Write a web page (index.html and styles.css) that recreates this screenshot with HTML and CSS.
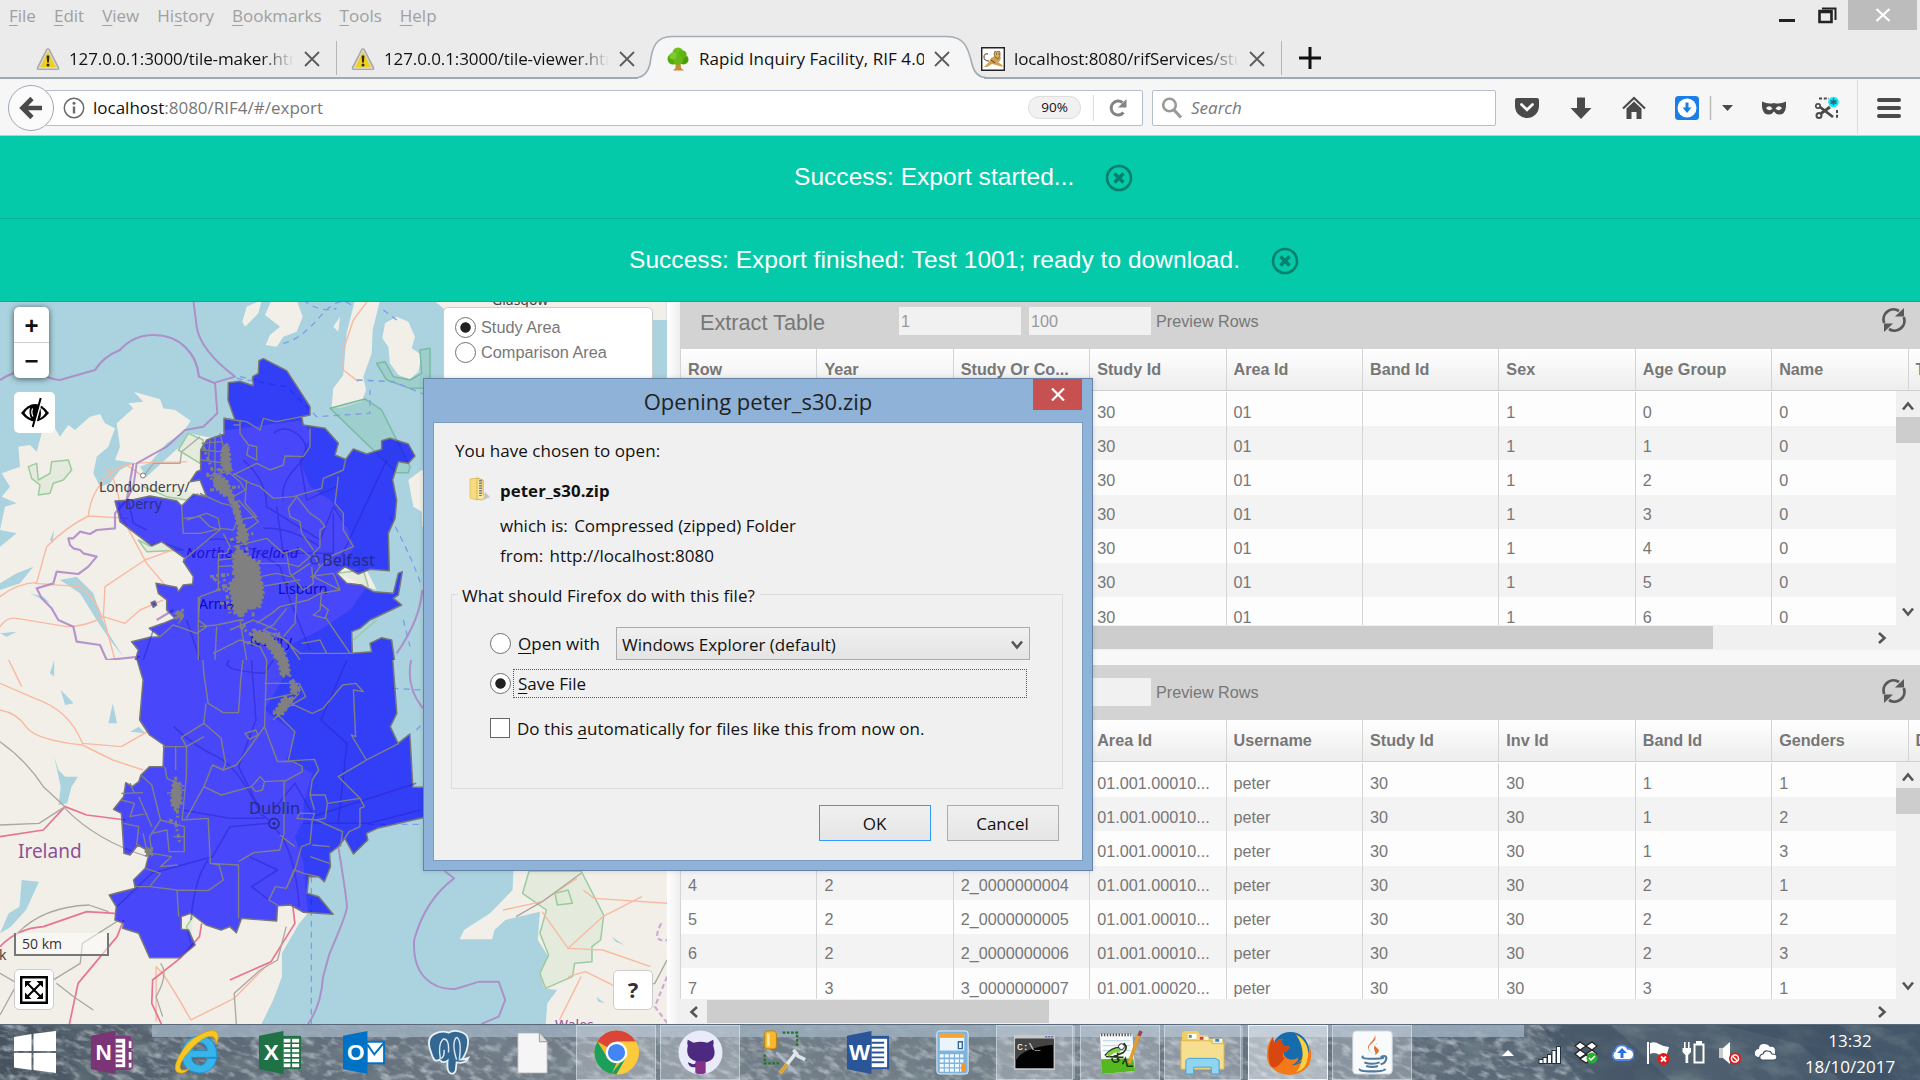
FILE: index.html
```html
<!DOCTYPE html>
<html lang="en">
<head>
<meta charset="utf-8">
<title>Rapid Inquiry Facility, RIF 4.0</title>
<link rel="stylesheet" href="styles.css">
</head>
<body>
<svg class="defs" width="0" height="0">
  <defs>
    <symbol id="warn" viewBox="0 0 24 24"><path d="M10 2.5Q12-.5 14 2.5L23 20Q24 23 21.500 23H2.500Q0 23 1 20Z" fill="#a9a9a2"/><path d="M12 3.200L21 21H3Z" fill="#f3cf1d" stroke="#dadad2" stroke-width="1.300"/><path d="M10.600 8.500h2.800l-.5 7h-1.800z" fill="#2c2c20"/><circle cx="12" cy="18" r="1.500" fill="#2c2c20"/></symbol>
    <symbol id="cross" viewBox="0 0 16 16"><path d="M1 1l14 14M15 1L1 15" stroke="#5c5c5c" stroke-width="1.800"/></symbol>
    <symbol id="refresh" viewBox="0 0 26 26"><path d="M3.200 16A10 10 0 0 1 18 4M22.800 10A10 10 0 0 1 8 22" fill="none" stroke="#58595b" stroke-width="2.800"/><path d="M23 1v8.500h-9zM3 25v-8.500h9z" fill="#58595b"/></symbol>
    <symbol id="up" viewBox="0 0 12 10"><path d="M1 8.500L6 2.500l5 6" fill="none" stroke="#555" stroke-width="2.600"/></symbol>
    <symbol id="down" viewBox="0 0 12 10"><path d="M1 1.500L6 7.500l5-6" fill="none" stroke="#555" stroke-width="2.600"/></symbol>
    <symbol id="right" viewBox="0 0 10 12"><path d="M2 1l5.500 5L2 11" fill="none" stroke="#555" stroke-width="2.600"/></symbol>
    <symbol id="left" viewBox="0 0 10 12"><path d="M8 1L2.500 6 8 11" fill="none" stroke="#555" stroke-width="2.600"/></symbol>
    <symbol id="dismiss" viewBox="0 0 28 28"><circle cx="14" cy="14" r="12" fill="none" stroke="#037f6d" stroke-width="2.600"/><path d="M9.500 9.500l9 9M18.500 9.500l-9 9" stroke="#037f6d" stroke-width="3.400"/></symbol>
  </defs>
</svg>

<header class="chrome">
  <div class="titlebar">
    <nav class="menu"><span><u>F</u>ile</span><span><u>E</u>dit</span><span><u>V</u>iew</span><span>Hi<u>s</u>tory</span><span><u>B</u>ookmarks</span><span><u>T</u>ools</span><span><u>H</u>elp</span></nav>
    <div class="winbtns">
      <svg width="16" height="30"><path d="M0 20.500h16" stroke="#222" stroke-width="3"/></svg>
      <svg width="19" height="30"><path d="M4 8.500h13.500V20" fill="none" stroke="#222" stroke-width="2"/><path d="M1.500 11h12v11h-12zM1 12h13" fill="none" stroke="#222" stroke-width="2.600"/></svg>
      <div class="winclose"><svg width="16" height="16" viewBox="0 0 16 16"><path d="M1.500 2l13 12M14.500 2l-13 12" stroke="#fff" stroke-width="2.300"/></svg></div>
    </div>
  </div>
  <div class="tabs">
    <div class="tab"><svg width="24" height="24"><use href="#warn"/></svg><span class="fade">127.0.0.1:3000/tile-maker.html</span><svg width="16" height="16"><use href="#cross"/></svg></div>
    <div class="tab"><svg width="24" height="24"><use href="#warn"/></svg><span class="fade">127.0.0.1:3000/tile-viewer.html</span><svg width="16" height="16"><use href="#cross"/></svg></div>
    <div class="tab active">
      <svg class="tabshape" width="350" height="44" viewBox="0 0 350 44"><path d="M0 44V43Q9 42 12 29C14 12 18 1.500 34 1.500H309C326 1.500 330 12 334 29Q337 42 346 43V44Z" fill="#f6f6f6"/><path d="M0 42.500Q9 41 12 29C14 12 18 1.500 34 1.500H309C326 1.500 330 12 334 29Q337 42 348 42.500" fill="none" stroke="#a3acb5" stroke-width="1.600"/></svg>
      <svg width="24" height="24" viewBox="0 0 24 24"><path d="M9.500 14h5l.5 7 3 2.500H7L9.500 21z" fill="#c98b35"/><circle cx="7" cy="12" r="5.500" fill="#56a80d"/><circle cx="17.500" cy="12.500" r="5" fill="#4d9d0b"/><circle cx="12" cy="6" r="5.500" fill="#6cc019"/><circle cx="16.500" cy="7.500" r="4" fill="#5db413"/><circle cx="12" cy="13" r="5" fill="#67b916"/><circle cx="7" cy="9" r="3.500" fill="#7bcb2b"/></svg>
      <span>Rapid Inquiry Facility, RIF 4.0</span><svg width="16" height="16"><use href="#cross"/></svg></div>
    <div class="tab last"><svg width="24" height="24" viewBox="0 0 24 24"><path d="M.7.700h22.600v22.600H.7z" fill="#fff" stroke="#222" stroke-width="1.400"/><path d="M3 20l5-5 2-4 4-2 6 1-1 4-2 1 4 3 1 2-7-2-4-1-5 3z" fill="#d2a04c"/><path d="M14 4l1 1 3-1 1 1v4l-2 3-3-2-1-3z" fill="#dcae55" stroke="#4d3c25" stroke-width=".6"/><path d="M8 14q-5 0-5-4t4-3M10 13l4 3M15 7h1M17.500 7h1" fill="none" stroke="#4d3c25" stroke-width="1"/></svg><span class="fade">localhost:8080/rifServices/studyResult</span><svg width="16" height="16"><use href="#cross"/></svg></div>
    <svg class="plus" width="22" height="22" viewBox="0 0 22 22"><path d="M11 0v22M0 11h22" stroke="#111" stroke-width="3"/></svg>
  </div>
  <div class="toolbar">
    <div class="back"><svg width="24" height="24" viewBox="0 0 24 24"><path d="M23 12H4M13 2.500L3.500 12l9.500 9.500" fill="none" stroke="#4a4a4a" stroke-width="4.600"/></svg></div>
    <div class="url">
      <svg width="22" height="22" viewBox="0 0 22 22"><circle cx="11" cy="11" r="9.700" fill="none" stroke="#6b6b6b" stroke-width="1.500"/><path d="M11 9.500v7" stroke="#6b6b6b" stroke-width="2.400"/><circle cx="11" cy="6.300" r="1.500" fill="#6b6b6b"/></svg>
      <span class="addr">localhost<i>:8080/RIF4/#/export</i></span>
      <span class="pill">90%</span>
      <span class="reload"><svg width="20" height="20" viewBox="0 0 20 20"><path d="M15.500 14.500A7 7 0 1 1 14.500 4.500" fill="none" stroke="#848484" stroke-width="3"/><path d="M18.500 1v8.500H10z" fill="#848484"/></svg></span>
    </div>
    <div class="search"><svg width="22" height="22" viewBox="0 0 22 22"><circle cx="8.500" cy="8" r="6.300" fill="none" stroke="#999" stroke-width="2.600"/><path d="M13 13l7 7.500" stroke="#999" stroke-width="3.200"/></svg><em>Search</em></div>
    <div class="tools">
      <svg width="26" height="24" viewBox="0 0 26 24"><path d="M3 2h20q2 0 2 2v6a12 12 0 0 1-24 0V4q0-2 2-2z" fill="#4a4a4a"/><path d="M7.500 8.500l5.500 5.300 5.500-5.300" fill="none" stroke="#f6f6f6" stroke-width="2.800" stroke-linecap="round"/></svg>
      <svg width="24" height="24" viewBox="0 0 24 24"><path d="M8 1.500h8V12h6.500L12 23 1.500 12H8z" fill="#4a4a4a"/></svg>
      <svg width="24" height="24" viewBox="0 0 24 24"><path d="M1 12.500L12 2l11 10.500" fill="none" stroke="#4a4a4a" stroke-width="2.200"/><path d="M4.500 12.500L12 5.500l7.500 7V23h-5v-7h-5v7h-5z" fill="#4a4a4a"/></svg>
      <svg width="24" height="24" viewBox="0 0 24 24"><rect width="24" height="24" rx="3.500" fill="#1a7ee6"/><circle cx="12" cy="12" r="9.500" fill="#fff"/><path d="M12 6.500v6" stroke="#1a7ee6" stroke-width="3"/><path d="M7.500 11.500h9L12 17z" fill="#1a7ee6"/></svg>
      <svg class="caretbox" width="28" height="24" viewBox="0 0 28 24"><path d="M4.500 0v24" stroke="#bbb" stroke-width="1.500"/><path d="M16 9h11l-5.500 6z" fill="#4a4a4a"/></svg>
      <svg width="24" height="24" viewBox="0 0 24 24"><path d="M0 5.500q6 3 12 1.500 6 1.500 12-1.500 1 13-7 13-3 0-5-3-2 3-5 3-8 0-7-13zM4 12q3 4 6.500.8-3-4.500-6.500-.8zM20 12q-3 4-6.500.8 3-4.500 6.500-.8z" fill="#4a4a4a" fill-rule="evenodd"/></svg>
      <svg width="24" height="24" viewBox="0 0 24 24"><path d="M4 2.500h10M22 14v8" fill="none" stroke="#4a4a4a" stroke-width="2" stroke-dasharray="3 1.800"/><circle cx="3" cy="10" r="2.200" fill="none" stroke="#4a4a4a" stroke-width="1.700"/><circle cx="4" cy="19.500" r="2.500" fill="none" stroke="#4a4a4a" stroke-width="2"/><path d="M5 11l13 10M6 17.500L15 11" stroke="#4a4a4a" stroke-width="2.800"/><circle cx="18.500" cy="6" r="5.300" fill="#12ebff"/><path d="M18.500 2.500v7M15.500 4.500l6 3M21.500 4.500l-6 3" stroke="#276b7d" stroke-width="1.600"/></svg>
    </div>
    <div class="burger"><i></i><i></i><i></i></div>
  </div>
</header>

<section class="notice n1"><span>Success: Export started...</span><svg width="28" height="28"><use href="#dismiss"/></svg></section>
<section class="notice n2"><span>Success: Export finished: Test 1001; ready to download.</span><svg width="28" height="28"><use href="#dismiss"/></svg></section>

<main class="content">
  <section class="map">
    <svg class="tiles" width="667" height="722" viewBox="0 302 667 722">
      <defs><clipPath id="ct"><rect x="0" y="300" width="667" height="360"/></clipPath><clipPath id="cb"><rect x="0" y="660" width="667" height="370"/></clipPath></defs>
      <rect y="300" width="667" height="730" fill="#aad3df"/>
      <g clip-path="url(#ct)"><g class="ns" transform="translate(0 300) scale(.33333)">
        <g class="land">
          <path d="M0 740L50 700 0 690 15 620 50 610 5 590 30 560 5 520 60 500 55 440 90 435 110 455 125 400 165 385 180 410 205 375 225 390 270 350 300 342 315 370 345 385 325 440 290 470 280 520 300 560 330 550 360 510 400 488 345 480 360 440 350 370 400 325 385 310 430 305 402 275 480 298 490 325 525 330 572 362 550 395 500 430 450 488 420 500 440 530 550 430 565 400 640 415 680 390 900 362 935 400 900 480 930 560 990 600 1030 650 1062 740 1020 800 1100 810 1130 870 1100 860 1050 930 960 990 880 1030 835 1100H0Z"/>
          <path d="M740 20L785 0 775 40 735 80 727 65ZM815 0H890L908 50 890 95 850 110 830 140 797 135 810 105 840 80 795 45ZM1065 0H1140L1118 90 1115 160 1090 230 1098 270 1085 305 1020 325 995 320 1000 265 1030 225 1040 100ZM1155 70L1190 50 1225 65 1245 110 1235 145 1265 165 1255 215 1230 237 1195 225 1170 190 1165 140 1147 115ZM1225 540L1265 510 1290 530V650L1240 620ZM1000 80L1020 50 1015 95ZM1290 690L1267 680 1265 630Z"/>
          <path d="M1180 0H2000V60H1950L1900 180 1800 200 1600 90 1480 60 1360 50 1300 0Z"/>
        </g>
        <g class="park"><path d="M85 500L110 490 115 540 150 520 155 485 205 480 215 510 190 540 160 550 150 580 115 585 120 555 95 535ZM535 450L565 400 610 420 600 490ZM415 720L440 755 550 750 480 725 450 738ZM430 560L500 590 560 600 595 580"/><path class="sea" d="M990 325L1095 297 1145 330 1230 500 1225 518H1190ZM1130 190L1155 185 1180 230 1230 240 1265 220 1260 150 1290 145V265L1230 265 1160 240Z"/><path d="M1010 820L1090 810 1105 860M1060 1020L1130 960"/></g>
        <path class="lake" d="M180 840L230 830 280 880 300 940 325 1000 370 1070 330 1020 290 960 240 880ZM90 880L130 890 150 910ZM0 1000L50 995 20 1010ZM0 850L50 820 100 800 60 850 0 870ZM150 720L162 690 158 730ZM440 880L450 900"/>
        <g class="road"><path d="M265 650C270 580 320 510 380 495S520 490 560 485M0 890Q50 850 110 848L140 740Q200 680 265 648L385 655M310 950L315 860 435 780 530 745M0 980Q20 950 50 955T200 980Q260 980 310 950L375 970 420 930 490 900M320 500Q360 560 360 640L440 790 495 855M310 950L345 1080M105 850L240 860Q290 900 305 950M1105 0L1060 60 1030 150V210L1075 245M380 495L430 530"/></g>
        <g class="rail"><path d="M430 530L460 490 540 490 545 455 600 410"/></g>
        <g class="border"><path d="M580 0L590 80Q600 150 705 230L645 248 652 340 610 380 555 390 500 440 410 490 400 560 380 600"/><path d="M0 240Q60 200 110 220T180 240L285 210Q310 170 360 150Q400 105 460 105C540 105 590 160 597 230L645 250M1267 870Q1260 960 1190 1060M400 490L380 600 345 640V685L290 690 270 702 240 695 220 715 205 715 210 735 220 745 240 750 250 760 290 770 265 800 235 822 170 815 160 850 110 865 125 895 155 925 175 960 220 980 230 1025 300 1035 320 1080 420 1070M470 960L520 930"/></g>
        <g class="ferry"><path d="M710 235L860 260 950 350 1110 340 1110 270M720 230L770 240M850 130Q900 120 960 50T1060 20M1070 240L1180 245 1290 290M1150 30L1190 60M1170 650Q1240 780 1265 860M1210 960L1230 1040M910 0Q960 40 1010 25"/></g>
      </g></g>
      <g clip-path="url(#cb)"><g class="ns" transform="translate(0 660) scale(.43367 .33333)">
        <g class="land"><path d="M0-5H640L650 60 610 150 680 220 660 300 720 340 700 430 700 480 680 530 700 610 710 760 690 790 650 880 650 950 630 1020 600 1100H0Z"/><path d="M1185 600L1182 690 1130 760 1070 810 1060 838 1135 838 1140 810 1165 780 1245 755 1240 840 1265 890 1245 940 1255 985 1285 990 1262 1030 1258 1100H1540V580Z"/></g>
        <g class="lake"><path d="M125 290L140 380 135 435 155 430 165 380 180 350 150 350 135 330ZM0 820L20 760 45 740 50 660 90 665 60 750 25 800ZM320 200L335 220 300 215ZM125 0V50L115 40ZM260 130L270 190 250 190ZM140 90L170 130 150 135ZM1410 830L1440 855 1420 845ZM1375 1010L1395 1030 1380 1025Z"/></g>
        <g class="park"><path d="M1220 633L1340 633 1392 765 1385 840 1365 860V905L1325 910 1320 950 1258 985 1245 940 1265 885 1245 820 1260 750 1205 700Z"/><path d="M1280 700L1310 690 1320 730 1285 735ZM440 850L430 800 445 770"/></g>
        <g class="road"><path d="M0 150Q40 160 60 200T190 255L260 300 330 330M0 70L80 115Q160 150 190 250L280 260 340 215M360 1085V920Q380 940 440 1080L540 1015 620 910M1160 750L1250 725 1290 690 1330 655M1250 755L1310 865 1390 870 1500 920M1345 690L1370 715 1540 730M1310 865L1390 770 1480 710M1310 950L1350 935 1420 980 1500 970M1290 1080L1340 950M20 0L50 80"/></g>
        <g class="pink"><path d="M0 530L100 510 150 440 200 465 290 480M0 860Q40 805 100 800L200 755 265 760M160 1092L180 970 270 830 285 780M372 1092L350 1030 352 960 415 895 460 830 465 790M530 960L625 905 680 790 675 735"/></g>
        <g class="rail"><path d="M0 245Q60 300 100 380L150 440 90 490 0 495M150 445Q220 540 340 590M110 970L185 910 190 850 275 780M0 940L40 970 0 1065M40 820Q100 740 205 735L250 755M130 970L170 1010 215 1050M1190 770L1250 725 1340 640M1450 990L1510 970 1538 900M370 910Q390 940 360 1010L375 1070M545 1092L540 1000 600 930 640 900 660 800"/></g>
        <g class="border"><path d="M975 145Q935 80 948 0M780 560Q800 720 800 740T760 880L745 950Q740 1040 710 1092M1025 633L1047 655Q980 720 955 840C950 950 1000 990 1050 987L1105 965H1150L1165 1020 1150 1070 1110 1092"/><path class="wb" d="M1525 790Q1500 850 1540 840M1538 950L1510 1040 1540 1092"/></g>
        <g class="ferry"><path d="M718 650V1092M905 85L975 90M960 210L975 190M850 493H975"/></g>
      </g></g>
      <g class="maplabels under-labels"><text x="186" y="558" class="ni">Northern Ireland</text><text x="278" y="594">Lisburn</text><text x="199" y="609">Armagh</text><text x="250" y="646">Newry</text></g>
      <g clip-path="url(#ct)"><g class="ns" transform="translate(0 300) scale(.33333)">
        <path class="area" d="M345 603L395 600 450 588 530 602 545 618 580 583 620 590 600 540 570 545 590 515 602 510V450L620 420 672 402V355L705 360 684 300 685 248 720 244 760 257 758 230 775 220 777 182 790 176 860 212 930 320V345L905 350 910 375 975 385 1015 430 1005 465 1037 478 1060 447 1100 462 1145 448V422L1170 415 1225 432 1245 468 1225 490 1195 485 1178 540 1190 600 1185 655 1165 700 1168 812 1110 808 1075 822 1035 800 1010 820 1040 850 1085 855 1120 875 1180 880 1195 820 1207 815 1195 885 1180 895 1205 915 1110 960 1080 985 1055 995 1057 1060 1115 1055 1110 1030 1145 1013 1175 1020 1186 1100H400L415 1050 395 1025 450 1012 480 1010 448 985 490 970 525 955 500 930V900L475 880 468 850 530 862 535 875 550 855 578 852 580 830 550 785 555 775 485 725 455 738 360 665 355 640ZM453 908L465 903 470 915 460 922Z"/>
        <path class="under" d="M820 400Q860 370 900 410T890 500 850 600M730 480Q800 540 800 620L960 720 1000 620 1040 680M790 685Q870 680 960 740M560 960L600 1080M1160 480L1010 800M900 480L920 600 1010 560M385 600L400 670 440 690M1000 640V760L850 760 830 620M430 1080L460 990M620 720Q700 700 840 800L870 900 930 1050"/>
        <path class="cells" d="M705 360L740 365 780 390 790 355 815 362 830 365 905 350M720 363V400L745 435 770 440V480L740 465 745 440M720 375H700M672 355L720 363M930 385V440L910 470 855 468 850 495 810 510 770 490 700 525M1037 478L1030 510 970 535 965 565 880 590 820 595 780 560 740 545 700 520M1015 530L1005 610 1030 640 1030 690 1060 740 1000 765 960 800 940 760 960 740 960 690 975 680 960 660 930 640 890 590 865 625 870 650 900 665 905 700 930 735 940 750M545 618L550 700 600 700 665 685 550 780M550 655L600 650 630 680 660 690 655 655 620 640 560 660M665 685L700 690 720 640 710 620 665 610 600 580M605 430L665 425M605 450L660 455 690 440M603 480L680 490M620 530L700 510M630 420L625 480M645 410V560L700 600M660 400L690 520 720 545 735 570 700 590M740 540L735 610 770 650 710 660M715 600L775 665 740 690M655 760L680 760 690 740 670 700M655 760L655 870 600 890M655 780L700 775M655 800L720 795M700 740L800 715 850 760 900 745 930 770 895 800 860 790 780 790M780 830L830 820 870 830 930 790M860 760L870 820 910 870 940 850 935 800M780 860L900 840M960 800L940 830 1020 870 960 880 925 900 840 920 815 940 770 970M1020 870L1000 820 930 830M965 870L960 930 940 945 975 955 985 930 960 910M975 950L1050 1060M860 925L820 975 790 990 860 1020 900 1080M890 880L885 970 850 1010M600 890L595 960 620 980 590 1000 550 985 520 975 480 1010M520 940L550 950 535 970M595 890V1080M650 980L645 1080M600 980L650 975 720 960 740 1080M760 1000L830 1000 900 1060 1057 1060M640 1060L720 1020 780 1040 800 1080M690 990L760 960 830 990M905 1030L960 1020 980 1060"/>
        <path class="dense" d="M680 430L688 460 692 510 682 520 668 500 664 460ZM640 520L680 540 700 590 670 585 645 560ZM695 595L715 610 722 660 735 680 745 710 738 725 712 725 715 680 705 640ZM712 740L740 765 775 790 780 830 790 880 780 920 745 925 725 950 705 940 700 910 690 870 690 850 710 830 700 810 703 770ZM760 990L800 1000 835 1030 850 1050 860 1080H830L800 1030 760 1020ZM530 938L548 930 548 955 530 955Z"/>
        <path class="densel" d="M620 520L700 610M630 570L720 560M670 440L660 560M690 600L740 740M690 720L760 700M630 830L780 810M650 870L790 850M660 910L780 900M700 760L720 950M740 740L760 950M670 820L690 940M780 780L700 930M640 835L700 880M720 980L860 1080M740 1030L840 1000M720 940L740 1000M650 510L700 500M610 440L640 520"/>
      </g></g>
      <g clip-path="url(#cb)"><g class="ns" transform="translate(0 660) scale(.43367 .33333)">
        <path class="area" d="M314-10L330 60 322 180 345 225 378 255 376 320H345L325 345 320 365 305 380 290 368 285 410 262 448 280 460 286 580 300 585 318 555 345 575 335 625 308 660 312 685 280 695 252 705 268 740 265 780 285 790 283 805 320 820 345 893H415L450 855 435 810 418 808V770L440 760 475 795 510 810 530 800 545 818 557 775 638 783 640 737 670 735 700 757 768 763 735 710 708 700 712 650 735 650 748 665 762 620 760 580 780 560 795 535 815 582 848 540 845 520 870 505 975 473 1000 470V382H952L945 222 918 250 900 200 915 160 905-10Z"/>
        <path class="under" d="M400 200Q450 260 500 290T600 460L620 480M620 490L530 500 490 590 350 640 270 740M630 500Q680 560 690 740M420 450L530 475H610M580 0L590 180 550 320 600 450M800 0L740 180 800 250 780 490M630 450L680 370 720 460M530 0Q500 30 610 40L630 0M700 490H850L970 450M480 600Q450 650 440 780M575 590L640 630 580 680 620 720M720 470L960 370"/>
        <path class="cells" d="M468 0L470 40 480 130 515 158H550L555 60 560 0M475 130L470 190 418 232 430 260V345L420 480 480 475 485 610 550 615V775M375 260H430M405 260V330M430 260L470 230M470 190L510 235 520 310 515 330 490 315 470 380 430 475M470 380L510 405 580 380 600 350 610 365 655 362V520L645 570 585 578 550 605M580 380L590 395 605 390 610 365M515 330L545 315 560 290 610 200 615 0M610 200L640 305 725 298 735 330 720 360 715 405 725 450M630 150L660 190 680 215 665 300M640 305L675 305 697 320V335L655 365M820 70L790 75 745 145 720 160 670 130M820 70L838 95 815 90 820 230 810 225 845 300 780 350 830 415 840 440 830 445V500L805 515 795 535M845 300L920 250M715 405L750 405 755 430 830 415M755 430L750 475 730 480 685 475 690 460 725 460 720 480 715 550 695 560 680 630 700 640 735 650M730 480L790 515 785 560M720 555L760 560M715 590L760 610M645 525L680 560M680 630L660 685 635 680 620 720 640 735M660 685L680 625M408 690L480 692 515 660 505 615 485 610M345 680L408 690 412 770M335 625L370 640 345 680H310M350 580L395 590 370 620 410 615M280 400L330 398M280 420L310 430 300 470 340 460M285 490L320 500 315 555M300 370L310 400M325 345L350 375 370 480 345 530 350 580M380 320L385 355 425 380M385 400L425 390M370 480L425 500V575L390 575 385 510 350 520M330 520L340 580M320 410L350 500M400 530L425 530M565 220L590 210 595 225 575 238ZM610 70L690 70 705 110 665 140 640 170M610 120L680 100M690 100L630 180"/>
        <path class="dense" d="M640-5H662L668 40 650 50ZM670 65L690 80 680 100 672 95ZM655 110L675 118 650 165 632 160ZM400 365L415 370 418 430 405 450 395 430ZM337 567L350 565 350 585 337 585Z"/>
        <path class="densel" d="M660 30L690 90 650 150M405 350L410 480M390 480L415 490M405 490L415 550"/>
      </g></g>
      <g class="maplabels"><text x="492" y="305">Glasgow</text><text x="99" y="492">Londonderry/</text><text x="125" y="509" class="tint">Derry</text><text x="322" y="566" class="city">Belfast</text><text x="249" y="814" class="city">Dublin</text><text x="18" y="858" class="irl">Ireland</text><text x="555" y="1030" class="wal">Wales</text><text x="-1" y="960">k</text></g>
      <circle cx="274" cy="823.500" r="5" fill="none" stroke="#242a86" stroke-width="1.400"/><circle cx="274" cy="823.500" r="1.600" fill="#242a86"/><circle cx="143" cy="475.500" r="2.500" fill="#fff" stroke="#777"/><circle cx="315" cy="560" r="4" fill="none" stroke="#3038a5" stroke-width="1.400"/>
    </svg>
    <div class="zoom"><span>+</span><span>−</span></div>
    <div class="mapbtn eye"><svg width="28" height="30" viewBox="0 0 28 30"><path d="M0 15Q14-3 28 15Q14 32 0 15Z" fill="#000"/><path d="M3.500 15Q6 11 9 9.500Q7.500 15 10 20.500Q6 19 3.500 15ZM24.500 15Q22 19 19 20.500Q21 15 19 9.500Q22 11 24.500 15Z" fill="#fff"/><path d="M11.500 10.500Q10 15 12 18.500" stroke="#fff" stroke-width="1.200" fill="none"/><path d="M21 0L13 30" stroke="#fff" stroke-width="2"/><path d="M19.700 0L11.700 29" stroke="#000" stroke-width="2"/></svg></div>
    <div class="layers"><label><b class="radio on"></b>Study Area</label><label><b class="radio"></b>Comparison Area</label></div>
    <div class="scale">50 km</div>
    <div class="mapbtn full"><svg width="28" height="28" viewBox="0 0 28 28"><path d="M1.200 1.200h25.600v25.600H1.200z" fill="#fff" stroke="#000" stroke-width="2.400"/><path d="M7 7l14 14M21 7L7 21" stroke="#000" stroke-width="2"/><path d="M5 5h6.500L5 11.500zM23 5v6.500L16.500 5zM5 23v-6.500l6.500 6.500zM23 23h-6.500l6.500-6.500z"/><circle cx="14" cy="14" r="1.500"/></svg></div>
    <div class="mapbtn help">?</div>
  </section>

  <section class="tables">
    <div class="panel p1">
      <div class="phead"><h2>Extract Table</h2><span class="inp">1</span><span class="inp">100</span><span>Preview Rows</span><svg width="26" height="26"><use href="#refresh"/></svg></div>
      <div class="row head"><span>Row</span><span>Year</span><span>Study Or Co...</span><span>Study Id</span><span>Area Id</span><span>Band Id</span><span>Sex</span><span>Age Group</span><span>Name</span><span>T</span></div>
      <div class="body">
        <div class="rows">
          <div class="row"><span></span><span></span><span></span><span>30</span><span>01</span><span></span><span>1</span><span>0</span><span>0</span></div>
          <div class="row"><span></span><span></span><span></span><span>30</span><span>01</span><span></span><span>1</span><span>1</span><span>0</span></div>
          <div class="row"><span></span><span></span><span></span><span>30</span><span>01</span><span></span><span>1</span><span>2</span><span>0</span></div>
          <div class="row"><span></span><span></span><span></span><span>30</span><span>01</span><span></span><span>1</span><span>3</span><span>0</span></div>
          <div class="row"><span></span><span></span><span></span><span>30</span><span>01</span><span></span><span>1</span><span>4</span><span>0</span></div>
          <div class="row"><span></span><span></span><span></span><span>30</span><span>01</span><span></span><span>1</span><span>5</span><span>0</span></div>
          <div class="row"><span></span><span></span><span></span><span>30</span><span>01</span><span></span><span>1</span><span>6</span><span>0</span></div>
        </div>
        <div class="vscroll"><svg width="12" height="10"><use href="#up"/></svg><i></i><svg class="end" width="12" height="10"><use href="#down"/></svg></div>
      </div>
      <div class="hscroll"><svg width="10" height="12"><use href="#left"/></svg><i class="t1"></i><svg class="end" width="10" height="12"><use href="#right"/></svg></div>
    </div>
    <div class="panel p2">
      <div class="phead"><h2></h2><span class="inp"></span><span class="inp"></span><span>Preview Rows</span><svg width="26" height="26"><use href="#refresh"/></svg></div>
      <div class="row head"><span></span><span></span><span></span><span>Area Id</span><span>Username</span><span>Study Id</span><span>Inv Id</span><span>Band Id</span><span>Genders</span><span>D</span></div>
      <div class="body">
        <div class="rows">
          <div class="row"><span></span><span></span><span></span><span>01.001.00010...</span><span>peter</span><span>30</span><span>30</span><span>1</span><span>1</span></div>
          <div class="row"><span></span><span></span><span></span><span>01.001.00010...</span><span>peter</span><span>30</span><span>30</span><span>1</span><span>2</span></div>
          <div class="row"><span></span><span></span><span></span><span>01.001.00010...</span><span>peter</span><span>30</span><span>30</span><span>1</span><span>3</span></div>
          <div class="row"><span>4</span><span>2</span><span>2_0000000004</span><span>01.001.00010...</span><span>peter</span><span>30</span><span>30</span><span>2</span><span>1</span></div>
          <div class="row"><span>5</span><span>2</span><span>2_0000000005</span><span>01.001.00010...</span><span>peter</span><span>30</span><span>30</span><span>2</span><span>2</span></div>
          <div class="row"><span>6</span><span>2</span><span>2_0000000006</span><span>01.001.00010...</span><span>peter</span><span>30</span><span>30</span><span>2</span><span>3</span></div>
          <div class="row"><span>7</span><span>3</span><span>3_0000000007</span><span>01.001.00020...</span><span>peter</span><span>30</span><span>30</span><span>3</span><span>1</span></div>
        </div>
        <div class="vscroll"><svg width="12" height="10"><use href="#up"/></svg><i></i><svg class="end" width="12" height="10"><use href="#down"/></svg></div>
      </div>
      <div class="hscroll"><svg width="10" height="12"><use href="#left"/></svg><i class="t2"></i><svg class="end" width="10" height="12"><use href="#right"/></svg></div>
    </div>
  </section>
</main>

<div class="dialog">
  <div class="dtitle"><span>Opening peter_s30.zip</span><div class="dclose"><svg width="14" height="13" viewBox="0 0 14 13"><path d="M1 .5l12 12M13 .5l-12 12" stroke="#fff" stroke-width="2.200"/></svg></div></div>
  <div class="dbody">
    <p class="chosen">You have chosen to open:</p>
    <div class="file">
      <svg width="22" height="24" viewBox="0 0 22 24"><path d="M1 2l7-1 6 2v18l-6 2-7-2z" fill="#f5dc82" stroke="#dfbe56" stroke-width=".8"/><path d="M8 1l6 2v14l3 4-4 2-5-1z" fill="#f9e7a0" stroke="#cfa948" stroke-width=".8"/><path d="M11.500 3v16" stroke="#727b86" stroke-width="2.800" stroke-dasharray="1.500 1"/><path d="M16 15l5 5-7 3z" fill="#c9c5b8"/></svg>
      <dl><dt><b>peter_s30.zip</b></dt><dt>which is: <span class="kind">Compressed (zipped) Folder</span></dt><dt>from: <span class="src">http://localhost:8080</span></dt></dl>
    </div>
    <div class="group">
      <span class="legend">What should Firefox do with this file?</span>
      <div class="opt o1"><b class="radio"></b><span><u>O</u>pen with</span><div class="combo">Windows Explorer (default)<svg width="12" height="12" viewBox="0 0 12 10"><path d="M1 1.500L6 7.500l5-6" fill="none" stroke="#555" stroke-width="2.600"/></svg></div></div>
      <div class="opt o2"><b class="radio on"></b><span class="focus"><u>S</u>ave File</span></div>
      <div class="opt o3"><b class="check"></b><span>Do this <u>a</u>utomatically for files like this from now on.</span></div>
    </div>
    <div class="actions"><div class="btn ok">OK</div><div class="btn">Cancel</div></div>
  </div>
</div>

<footer class="taskbar">
  <svg class="wall" width="1920" height="56" viewBox="0 0 1920 56" preserveAspectRatio="none">
    <defs><linearGradient id="wg"><stop offset="0" stop-color="#46535f"/><stop offset=".12" stop-color="#5e6a77"/><stop offset=".3" stop-color="#727d88"/><stop offset=".55" stop-color="#6f7b85"/><stop offset=".78" stop-color="#5a6876"/><stop offset="1" stop-color="#43566a"/></linearGradient>
    <filter id="rock" x="0" y="0" width="100%" height="100%"><feTurbulence type="fractalNoise" baseFrequency=".09 .14" numOctaves="4" seed="8"/><feColorMatrix values="0 0 0 0 .68  0 0 0 0 .72  0 0 0 0 .76  2.200 0 0 0 -1"/></filter>
    <filter id="rockd" x="0" y="0" width="100%" height="100%"><feTurbulence type="fractalNoise" baseFrequency=".03 .06" numOctaves="4" seed="3"/><feColorMatrix values="0 0 0 0 .2  0 0 0 0 .27  0 0 0 0 .28  2.200 0 0 0 -1"/></filter></defs>
    <rect width="1920" height="56" fill="url(#wg)"/><g transform="skewX(35)"><rect x="-60" width="1620" height="56" filter="url(#rock)" opacity=".75"/><rect x="-60" width="2040" height="56" filter="url(#rockd)" opacity=".6"/></g>
    <path d="M1540 0h70l60 56h-90zM1720 0l80 20 40 36h60l-60-56z" fill="#3a4b60" opacity=".45"/>
    <rect x="152" y="1" width="1372" height="12" fill="#9badbd" opacity=".85"/><path d="M0 .5h1920" stroke="#59697a"/>
  </svg>
  <div class="start"><svg width="42" height="42" viewBox="0 0 42 42"><path d="M0 6l17.500-3v17H0zM19.500 2.700L42 0v20H19.500zM0 22h17.500v17L0 36.500zM19.500 22H42v20l-22.500-3z" fill="#fff"/></svg></div>
  <div class="apps">
    <div><svg viewBox="0 0 46 46"><path d="M24 6h16q2 0 2 2v31q0 2-2 2H24z" fill="#80397b"/><path d="M26 9h10v29H26z" fill="#fff"/><path d="M26 14h7M26 19h7M26 24h7M26 29h7M26 34h7" stroke="#80397b" stroke-width="2"/><path d="M39 11h4v8h-4zM39 22h4v9h-4zM39 33h4v6h-4z" fill="#fff" stroke="#80397b" stroke-width="1.200"/><path d="M1 6l25-5v44L1 40z" fill="#7b3576"/><text x="5.500" y="31" class="let">N</text></svg></div>
    <div><svg viewBox="0 0 46 46"><path fill-rule="evenodd" d="M44 29Q40 44 26 44 8 43 8 25 9 7 26 6 44 7 44 28H18q1 8 9 8 5 0 7-7zM18 21h16q-1-8-8-8-7 1-8 8z" fill="#37b4ea" stroke="#148ccb" stroke-width=".8"/><path d="M6 44Q-3 43 5 27T26 5q17-9 19 0 1 4-2 9 0-10-9-7T11 27Q3 39 8 41q3 1 8-2-5 6-10 5z" fill="#f7c824" stroke="#d89e12" stroke-width=".8"/></svg></div>
    <div><svg viewBox="0 0 46 46"><path d="M24 6h20v34H24z" fill="#207245"/><path d="M26 9h16v29H26z" fill="#fff"/><path d="M26 13.500h17M26 18.500h17M26 23.500h17M26 28.500h17M26 33.500h17M34 9v30" stroke="#207245" stroke-width="1.700"/><path d="M1 6l25-5v44L1 40z" fill="#1f7244"/><text x="6" y="31" class="let">X</text></svg></div>
    <div><svg viewBox="0 0 46 46"><path d="M24 11h20v24H24z" fill="#0072c6"/><path d="M26 13h16v20H26z" fill="#fff"/><path d="M26 15l7 10L43 13" fill="none" stroke="#0072c6" stroke-width="2"/><path d="M1 6l25-5v44L1 40z" fill="#0072c6"/><text x="5" y="31" class="let">O</text></svg></div>
    <div><svg viewBox="0 0 46 50"><path d="M8 4Q16 0 23 3q7-4 16 0 9 4 4 20-3 8-6 10 4 0 8-2-3 7-13 5l-1 9q-2 5-6 3-4-2-3-14-5 4-9-1-6 4-9-7Q-3 9 8 4z" fill="#336791" stroke="#e8f0f6" stroke-width="2"/><path d="M17 10q-6 6-3 22M17 10q7-1 6 15M32 8q-6 6 0 25M32 8q6 4 3 25M15 32q4-4 3-10" fill="none" stroke="#dce8f1" stroke-width="1.600"/></svg></div>
    <div><svg viewBox="0 0 46 46"><path d="M8 3h22l8 9v32H8z" fill="#f5f5f5" stroke="#aaa" stroke-width=".8"/><path d="M30 3v9h8" fill="#ddd" stroke="#999"/></svg></div>
    <div class="box"><svg viewBox="0 0 46 46"><circle cx="23" cy="23" r="22.500" fill="#f3bb32"/><path d="M23 23L3.500 11.700A22.500 22.500 0 0 1 42.500 11.700H23z" fill="#dc4437"/><path d="M3.500 11.700L14 29l9 5-5 11A22.500 22.500 0 0 1 3.500 11.700z" fill="#1c9f5b"/><path d="M33 28l-10 17.500-5-1L28 32z" fill="#1c9f5b"/><path d="M43 12H23l10 16-10 17.500A22.500 22.500 0 0 0 43 12z" fill="#fccb3c"/><circle cx="23" cy="23" r="11" fill="#fff"/><circle cx="23" cy="23" r="8.800" fill="#4285f4"/></svg></div>
    <div class="box"><svg viewBox="0 0 46 46"><circle cx="23" cy="23" r="22.500" fill="#e9eafa"/><path d="M10 10l6 3q7-2 14 0l6-3q1 4 0 6 5 14-8 17v11q-5 2-10 0v-6q-7 1-8-5l3 1q3 2 5 0 0-2 1-2-12-3-9-16-1-3 0-6z" fill="#4d2a80"/><path d="M18 32h10v12q-5 2-10 0z" fill="#85318c"/></svg></div>
    <div><svg viewBox="0 0 46 50"><rect x="1" y="1" width="13" height="20" rx="3" fill="#f5b82f" stroke="#bd7a0b"/><path d="M5 4v14" stroke="#ffe69a" stroke-width="3"/><path d="M21 3h16v16M1 27v10h16" fill="none" stroke="#24752c" stroke-width="2.600" stroke-dasharray="3 1.600"/><path d="M14 25l22 23" stroke="#abb7c5" stroke-width="3"/><path d="M18 48l19-24" stroke="#e3e7ed" stroke-width="4"/><path d="M18 48l8-10" stroke="#e0a228" stroke-width="4"/><path d="M33 22l5 7 8 4" stroke="#dce3ed" stroke-width="4" fill="none"/></svg></div>
    <div><svg viewBox="0 0 46 46"><path d="M24 6h20v34H24z" fill="#2a5699"/><path d="M26 9h16v29H26z" fill="#fff"/><path d="M26 13h13M26 18h13M26 23h13M26 28h13M26 33h13" stroke="#2a5699" stroke-width="2"/><path d="M1 6l25-5v44L1 40z" fill="#2a5699"/><text x="3" y="31" class="let">W</text></svg></div>
    <div><svg viewBox="0 0 46 46"><rect x="7" y="1" width="32" height="44" rx="3" fill="#7db4de" stroke="#e4f2fc"/><rect x="10" y="4" width="25" height="17" fill="#eaf4fb"/><path d="M10 6h25" stroke="#f5a434" stroke-width="4"/><path d="M10 26.500h24M10 31.500h24M10 36.500h24M10 41h24" stroke="#f4f9ff" stroke-width="3.400" stroke-dasharray="4 1.200"/><rect x="32" y="34" width="4" height="9" fill="#f49532"/><path d="M29 12h4v7h-4z" fill="none" stroke="#336693" stroke-width="1.400"/></svg></div>
    <div class="box stack"><svg viewBox="0 0 46 46"><path d="M2 5h42v36H2z" fill="#c6c8ca"/><path d="M3.500 9h39v30h-39z" fill="#020202"/><path d="M3.500 9h39v6Q10 18 3.500 32z" fill="#444"/><path d="M34 7h8" stroke="#5a6da5" stroke-width="1.500" stroke-dasharray="2 1"/><text x="5" y="20" class="cmd">C:\_</text></svg></div>
    <div class="box"><svg viewBox="0 0 46 46"><path d="M2 4h33l3 38-34 3z" fill="#f8fafb"/><path d="M3 30l33-1 2 13-34 3z" fill="#54b91e"/><path d="M5 11h28M5 16h28M5 21h28" stroke="#a6c7dc" stroke-width=".8"/><path d="M3 5h31" stroke="#555" stroke-width="3" stroke-dasharray="1.500 1.500"/><path d="M7 26q8-9 16-8l4-4q4 4-1 9l-10 4q-4 3 1 6 6 0 4-4M8 27l18 1M20 23v8M25 35l3-6 2 8h6" fill="none" stroke="#203416" stroke-width="1.600"/><path d="M10 26q6-6 13-5" stroke="#81d23a" stroke-width="4" fill="none"/><circle cx="24" cy="17" r="3" fill="#fff" stroke="#222"/><path d="M32 34L42 4" stroke="#e29d2c" stroke-width="3.600"/><path d="M42 6l2-5" stroke="#a1424a" stroke-width="3.600"/></svg></div>
    <div class="box stack"><svg viewBox="0 0 46 46"><path d="M2 3l2-2h14l3 4h7l2 4h14v6H2z" fill="#f2cd61"/><path d="M8 4h9v5H8z" fill="#fff"/><path d="M19 7h10v4H19zM34 9h9v4h-9z" fill="#e9f2ff"/><path d="M9 5h3v3H9z" fill="#3fa63f"/><path d="M20 7h4v3h-4z" fill="#da3c2f"/><path d="M36 9h4v3h-4z" fill="#3687cb"/><path d="M1 11h30l2 3h12v26H1z" fill="#f6df91" stroke="#dcb651"/><path d="M6 45V31l3-2h27l4 2v14h-8v-7H14v7z" fill="#8fd4f1" stroke="#4aa4d2"/></svg></div>
    <div class="box lit"><svg viewBox="0 0 46 46"><circle cx="25" cy="21" r="19" fill="#176cad"/><path d="M27 2q9 4 11 14 3 14-8 19 17-7 14-22 9 30-20 33Q4 45 1 28 0 15 7 7q0 4 2 6 4-4 8-4-2 4 1 7l6 1q0 3-6 6 0 5 6 7 5 1 9-2 0 5-7 8 14 0 16-14Q42 9 27 2z" fill="#f47919"/><path d="M7 7q0 4 2 6 4-4 8-4-2 4 1 7l6 1q0 3-6 6-2 4 1 6Q9 44 4 35 0 20 7 7z" fill="#d94711"/><path d="M31 5q13 7 12 21T31 43Q44 25 31 5z" fill="#fbd042"/></svg></div>
    <div class="box"><svg viewBox="0 0 46 50"><rect x="1" y="1" width="44" height="48" rx="4" fill="#f8fafc" stroke="#c7d0d8"/><path d="M25 4q4 6-3 11t1 11q-9-5-2-12t4-10zM30 14q-7 4-5 8t1 6q7-5 2-8t2-6z" fill="#e76f28"/><path d="M13 29q-5 3 10 3t11-2M14 36q9 3 17 0M16 40q7 2 13 0M9 43q-2 3 13 3t15-3M32 30q8-3 6 3-1 4-6 5" fill="none" stroke="#50799b" stroke-width="2.300"/></svg></div>
  </div>
  <div class="tray">
    <svg width="12" height="24" viewBox="0 0 12 24"><path d="M0 15l6-6 6 6z" fill="#fff"/></svg>
    <svg width="24" height="24" viewBox="0 0 24 24"><path d="M3 18v5M7 16v7M11.500 13v10M16 9v14M20.500 5v18" stroke="#20303e" stroke-width="5"/><path d="M3 19v3M7 17v5M11.500 14v8M16 10v12M20.500 6v16" stroke="#fff" stroke-width="3"/></svg>
    <svg width="24" height="24" viewBox="0 0 24 24"><path d="M6 1l6 4-6 4-5-4zM18 1l5 4-5 4-6-4zM6 9l6 4-6 4-5-4zM18 9l5 4-5 4-6-4zM12 14l6 4-6 4-6-4z" fill="#fff" stroke="#222" stroke-width="1.200"/><circle cx="18" cy="17" r="5.500" fill="#27ad32"/><path d="M15 17l2 2 4-4" stroke="#fff" stroke-width="1.500" fill="none"/></svg>
    <svg width="24" height="24" viewBox="0 0 24 24"><path d="M6 19a5 5 0 0 1-1-9 7 7 0 0 1 13-2 5.500 5.500 0 0 1 1 11z" fill="#fff" stroke="#4f86e8" stroke-width="1.800"/><path d="M12 7l5 5h-3.500v5h-3v-5H7z" fill="#2472eb"/></svg>
    <svg width="24" height="24" viewBox="0 0 24 24"><path d="M2 1v22" stroke="#fff" stroke-width="2"/><path d="M4 2q5-2 9 1 5 3 10 3l-3 10q-5 0-8-3-4-2-8 0z" fill="#fff"/><circle cx="17.500" cy="18" r="6" fill="#e01b18"/><path d="M15 15.500l5 5M20 15.500l-5 5" stroke="#fff" stroke-width="1.800"/></svg>
    <svg width="24" height="24" viewBox="0 0 24 24"><path d="M12.500 3.500h9v18h-9zM15 1h4v2h-4z" fill="#53636f" stroke="#fff" stroke-width="2"/><path d="M2.800 1v6M6.800 1v6" stroke="#fff" stroke-width="1.600"/><path d="M.5 7h8.500v4l-2.800 3v8H3.500v-8L.5 11z" fill="#fff"/></svg>
    <svg width="24" height="24" viewBox="0 0 24 24"><path d="M1 7h4v10H1z" fill="#ccc"/><path d="M5 7l7-6v22l-7-6z" fill="#fff"/><circle cx="17" cy="17.500" r="6" fill="#e01b18"/><circle cx="17" cy="17.500" r="3.500" fill="none" stroke="#fff" stroke-width="1.500"/><path d="M14.500 15l5 5" stroke="#fff" stroke-width="1.500"/></svg>
    <svg width="24" height="24" viewBox="0 0 24 24"><path d="M4 16q-4-1-3-5 1-3 4-3 0-5 5-5 4 0 6 3 5-1 5 4v3z" fill="#fff"/><path d="M8 19q-3-1-2-4 1-2 3-2 1-4 5-3 3 0 4 3 5 0 5 3t-3 3z" fill="#fff" stroke="#45535f" stroke-width="1.200"/></svg>
  </div>
  <div class="clock"><span>13:32</span><span>18/10/2017</span></div>
</footer>
</body>
</html>
```
FILE: styles.css
```css
* { box-sizing: border-box; }
body { margin: 0; width: 1920px; height: 1080px; overflow: hidden; position: relative; display: flex; flex-direction: column; font-family: "Open Sans", "Noto Sans", sans-serif; font-size: 17px; color: #111; background: #fff; }
svg { display: block; flex: none; }
.defs { position: absolute; }
u { text-decoration: underline; text-underline-offset: 3px; text-decoration-thickness: 1px; }
p, h2, dl { margin: 0; font-weight: normal; }

.chrome { height: 136px; background: #ebebeb; flex: none; display: flex; flex-direction: column; }
.titlebar { height: 35px; display: flex; justify-content: space-between; }
.menu { display: flex; gap: 18px; padding-left: 9px; color: #a0a0a0; line-height: 32px; }
.winbtns { display: flex; gap: 23px; padding-right: 3px; }
.winclose { width: 69px; height: 30px; margin-left: -12px; background: #bcbcbc; display: flex; align-items: center; justify-content: center; }
.tabs { height: 44px; display: flex; padding-left: 22px; border-bottom: 2px solid #9fa9b3; }
.tab { width: 315px; height: 43px; padding: 4px 0 0 14px; display: flex; align-items: center; position: relative; flex: none; color: #111; }
.tab span { width: 225px; margin: 0 10px 0 9px; overflow: hidden; white-space: nowrap; letter-spacing: -.1px; z-index: 1; }
.tab > svg { z-index: 1; }
.tab.active span { letter-spacing: .06px; }
.fade { -webkit-mask-image: linear-gradient(90deg, #000 85%, transparent 100%); mask-image: linear-gradient(90deg, #000 85%, transparent 100%); }
.tab:first-child, .tab.last { border-style: solid; border-width: 0 1px 0 0; border-image: linear-gradient(transparent 16%, #b5b5b5 16%, #b5b5b5 90%, transparent 90%) 1; }
.tab svg.tabshape { position: absolute; left: -14px; top: 0; z-index: 0; }
.plus { margin: 12px 0 0 17px; }
.toolbar { height: 57px; background: #f6f6f6; border-bottom: 1px solid #c5c9cb; display: flex; align-items: center; padding-left: 8px; padding-top: 1px; }
.back { width: 46px; height: 46px; border: 1px solid #9da8b8; border-radius: 50%; background: #fbfbfb; display: flex; align-items: center; justify-content: center; z-index: 1; flex: none; }
.url { width: 1097px; height: 36px; margin-left: -8px; border: 1px solid #b4bfcd; background: #fff; display: flex; align-items: center; padding-left: 16px; border-radius: 0 2px 2px 0; flex: none; }
.addr { margin-left: 8px; flex: 1; }
.addr i { font-style: normal; color: #777; }
.pill { width: 53px; height: 23px; border: 1px solid #ddd; border-radius: 11px; background: #f1f1f1; font-size: 13.5px; line-height: 21px; text-align: center; }
.reload { margin-left: 12px; width: 49px; height: 26px; border-left: 1px solid #ddd; padding: 3px 0 0 14px; }
.search { width: 344px; height: 36px; margin-left: 9px; border: 1px solid #b4bfcd; background: #fff; border-radius: 2px; display: flex; align-items: center; padding-left: 8px; gap: 8px; color: #777; flex: none; }
.tools { display: flex; align-items: center; padding-left: 18px; width: 361px; flex: none; }
.tools svg { margin-right: 29px; }
.tools .caretbox { margin: 0 28px 0 -24px; }
.tools svg:nth-child(4) { margin-right: 31px; }
.burger { border-left: 1px solid #ddd; height: 56px; padding: 18px 0 0 19px; display: flex; flex-direction: column; gap: 3.500px; }
.burger i { display: block; width: 24px; height: 4.500px; border-radius: 2px; background: #4a4a4a; }

.notice { height: 83px; background: #04caa9; flex: none; display: flex; align-items: center; font: 24.500px "Liberation Sans", Arial, sans-serif; color: #fff; border-bottom: 1px solid #03b096; padding-top: 2px; }
.n1 { padding-left: 794px; }
.n2 { padding-left: 629px; }
.notice span { margin-right: 31px; position: relative; top: -1px; letter-spacing: .05px; }

.content { display: flex; height: 722px; flex: none; background: #fff; }
.map { width: 667px; position: relative; overflow: hidden; flex: none; }
.ns path { vector-effect: non-scaling-stroke; fill: none; stroke-linejoin: round; }
.ns .land path { fill: #f2efe9; }
.ns .park path { fill: #d8e8cf; fill-opacity: .5; stroke: #9ccba0; stroke-width: 1.500; }
.ns .park .sea { fill: #93c9c0; stroke: #79bba0; }
.ns .lake path, .ns path.lake { fill: #aad3df; }
.ns .road path { stroke: #f9b9a0; stroke-width: 1.400; }
.ns .pink path { stroke: #e8748f; stroke-width: 1.700; }
.ns .rail path { stroke: #aaa7a3; stroke-width: 1.300; }
.ns .border path { stroke: #ac86c6; stroke-width: 2; opacity: .85; }
.ns .border path + path { stroke-width: 2.200; }
.ns .border .wb { stroke: #cc9fd2; stroke-dasharray: 5 3; }
.ns .ferry path { stroke: #7c9de8; stroke-width: 1.300; stroke-dasharray: 6 5; }
.ns path.area { fill: #00f; fill-opacity: .7; stroke: #777; stroke-width: 1.500; }
.ns path.under { stroke: #2a22cc; stroke-width: 1.500; opacity: .5; }
.ns path.cells { stroke: #808084; stroke-width: 1.400; }
.ns path.dense { fill: #808080; stroke: #808080; stroke-width: 3; stroke-dasharray: 3 2; }
.ns path.densel { stroke: #808080; stroke-width: 3; stroke-dasharray: 4 2 2 3; }
.maplabels { font: 14px "Noto Sans", sans-serif; fill: #444; }
.maplabels .tint { fill: #2a2f87; font-size: 14px; }
.maplabels .city { fill: #252b87; font-size: 16.500px; }
.under-labels { fill: #222; }
.maplabels .ni { fill: #6a3c78; font-style: italic; font-size: 15px; }
.maplabels .irl { fill: #8d5195; font-size: 19px; }
.maplabels .wal { fill: #8d5195; font-size: 14px; }
.zoom { position: absolute; left: 14px; top: 5px; width: 35px; height: 71px; border-radius: 5px; background: #fff; box-shadow: 0 1px 6px rgba(0,0,0,.6); display: flex; flex-direction: column; font: bold 24px/37px "Liberation Sans", sans-serif; text-align: center; color: #111; }
.zoom span { height: 35px; }
.zoom span + span { border-top: 1px solid #ccc; height: 36px; line-height: 36px; }
.mapbtn { position: absolute; background: #fff; border-radius: 5px; display: flex; align-items: center; justify-content: center; }
.eye { left: 14px; top: 90px; width: 41px; height: 41px; }
.full { left: 14px; top: 667px; width: 40px; height: 41px; border: 1px solid #ccc; }
.help { left: 613px; top: 668px; width: 40px; height: 40px; border: 1px solid #ccc; font: bold 22px/36px "Noto Sans", sans-serif; color: #333; padding-bottom: 2px; }
.layers { position: absolute; left: 443px; top: 5px; width: 210px; height: 90px; background: #fff; border: 1px solid #ccc; border-radius: 5px; padding: 9px 0 0 11px; font: 16.300px/21px "Liberation Sans", Arial, sans-serif; color: #777; display: flex; flex-direction: column; gap: 3.500px; }
.layers label { display: flex; align-items: center; gap: 5px; }
.radio { width: 21px; height: 21px; border: 1.500px solid #707070; border-radius: 50%; background: #fff; flex: none; display: block; }
.radio.on { background: radial-gradient(circle, #222 4.800px, #fff 5.600px); }
.scale { position: absolute; left: 14px; top: 631px; width: 95px; height: 23px; border: 2px solid #777; border-top: 0; background: rgba(255,255,255,.5); padding-left: 6px; font-size: 14px; line-height: 21px; color: #333; }

.tables { width: 1253px; padding-left: 13px; background: linear-gradient(90deg, #fff, #eee 13px); font: 16.200px "Liberation Sans", Arial, sans-serif; color: #777; display: flex; flex-direction: column; gap: 15px; }
.panel { width: 1240px; background: #fdfdfd; overflow: hidden; flex: none; display: flex; flex-direction: column; }
.p1 { height: 348px; }
.p2 { height: 359px; box-shadow: 0 -15px 0 #f8f8f8; }
.phead { height: 47px; background: #d3d3d3; display: flex; align-items: flex-start; padding: 5px 13px 0 20px; flex: none; }
.p2 .phead { height: 55px; padding-top: 13px; }
.phead h2 { font-size: 21.700px; width: 199px; line-height: 32px; }
.inp { width: 122px; height: 28px; background: #f1f1f1; color: #999; padding-left: 2px; margin-right: 8px; }
.phead span { line-height: 28px; }
.phead span.inp + span:not(.inp) { margin-left: -3px; }
.phead svg { margin-left: auto; }
.row { display: flex; height: 34.200px; flex: none; }
.row span { width: 136.400px; flex: none; padding: 2.500px 0 0 7px; line-height: 34px; border-left: 1px solid #d4d4d4; white-space: nowrap; }
.row.head { height: 42px; background: linear-gradient(#fff, #ededed); border-bottom: 1.500px solid #d0d0d0; font-weight: bold; }
.row.head span { line-height: 34px; }
.body { display: flex; flex: 1; min-height: 0; }
.rows { width: 1216px; overflow: hidden; padding-top: 1px; height: 100%; }
.rows .row:nth-child(even) { background: #f3f3f3; }
.vscroll { width: 24px; background: #f0f0f0; display: flex; flex-direction: column; align-items: center; padding: 10px 0 8px; }
.vscroll i { width: 24px; height: 26px; background: #cdcdcd; margin-top: 6px; }
.end { margin: auto 0 0; }
.hscroll { height: 25px; background: #f0f0f0; display: flex; align-items: center; padding: 0 33px 0 9px; flex: none; }
.hscroll i { height: 23px; background: #cdcdcd; margin-left: 8px; }
.hscroll .end { margin: 0 0 0 auto; }
.t1 { width: 1006px; }
.t2 { width: 342px; }

.dialog { position: absolute; left: 423px; top: 378px; width: 670px; height: 493px; background: #8fb2d8; border: 1px solid #6483a6; padding: 0 9px 9px; display: flex; flex-direction: column; box-shadow: 0 0 5px rgba(0,0,0,.15); }
.dtitle { height: 43px; position: relative; text-align: center; font-size: 22px; line-height: 45px; color: #222; }
.dclose { position: absolute; right: 1px; top: 0; width: 49px; height: 31px; background: #c75050; display: flex; align-items: center; justify-content: center; }
.dbody { flex: 1; background: #f0f0f0; border: 1px solid #7b9bbf; padding: 17px 19px 0 17px; }
.chosen { line-height: 22px; padding-left: 4px; letter-spacing: .05px; }
.file { display: flex; padding: 15px 0 0 18px; gap: 9px; height: 116px; }
.file dt { line-height: 24px; height: 35px; padding-top: 2px; }
.file dt:first-child { font-size: 16.800px; letter-spacing: .1px; }
.file dt:nth-child(2) { height: 30px; }
.kind { margin-left: 2px; }
.src { margin-left: 2px; }
.group { border: 1px solid #dcdcdc; height: 195px; margin-top: 16px; position: relative; padding: 32px 0 0 38px; }
.legend { position: absolute; left: 6px; top: -11px; line-height: 24px; padding: 0 5px 0 4px; background: #f0f0f0; white-space: nowrap; letter-spacing: .05px; }
.opt { display: flex; align-items: center; white-space: nowrap; }
.o1 { height: 33px; }
.o1 span { margin-left: 7px; width: 98px; }
.combo { width: 414px; height: 33px; border: 1px solid #acacac; background: linear-gradient(#f0f0f0, #e4e4e4); display: flex; align-items: center; justify-content: space-between; padding: 2px 6px 0 5px; }
.o2 { height: 29px; margin-top: 9px; }
.focus { margin-left: 2px; width: 514px; height: 29px; border: 1px dotted #555; padding-left: 4px; line-height: 27px; }
.o3 { margin-top: 18px; }
.o3 span { margin-left: 7px; padding-top: 1px; letter-spacing: .03px; }
.check { width: 20px; height: 20px; border: 1px solid #666; background: #fff; }
.actions { display: flex; gap: 16px; justify-content: flex-end; margin: 16px 4px 0 0; }
.btn { width: 112px; height: 36px; border: 1px solid #acacac; background: linear-gradient(#f0f0f0, #e5e5e5); text-align: center; line-height: 35px; padding-right: 1px; }
.ok { border-color: #3399ff; }

.taskbar { height: 56px; display: flex; position: relative; background: #56636f; flex: none; overflow: hidden; }
.wall { position: absolute; left: 0; top: 0; }
.start { width: 70px; padding: 7px 0 0 14px; position: relative; }
.apps { display: flex; position: relative; }
.apps > div { width: 84px; height: 56px; display: flex; align-items: center; justify-content: center; }
.apps > div.box { width: 80px; margin: 0 2px; height: 55px; margin-top: 1px; border: 1px solid rgba(230,240,250,.5); background: rgba(225,230,235,.3); }
.apps > div.stack { box-shadow: 3px 0 0 -1px rgba(230,240,250,.35); width: 77px; margin-right: 5px; }
.apps > div.lit { background: rgba(235,240,245,.55); border-color: #eef4fa; }
.apps svg { width: 45px; height: 45px; }
.let { font: bold 23px "Liberation Sans", sans-serif; fill: #fff; }
.cmd { font: 10px "Liberation Mono", monospace; fill: #fff; }
.tray { display: flex; align-items: center; gap: 12px; position: absolute; left: 1502px; top: 17px; height: 24px; }
.tray svg:first-child { margin-right: 12px; }
.clock { position: absolute; left: 1790px; top: 4px; width: 120px; display: flex; flex-direction: column; text-align: center; color: #fff; font-size: 17px; line-height: 26px; }
```
